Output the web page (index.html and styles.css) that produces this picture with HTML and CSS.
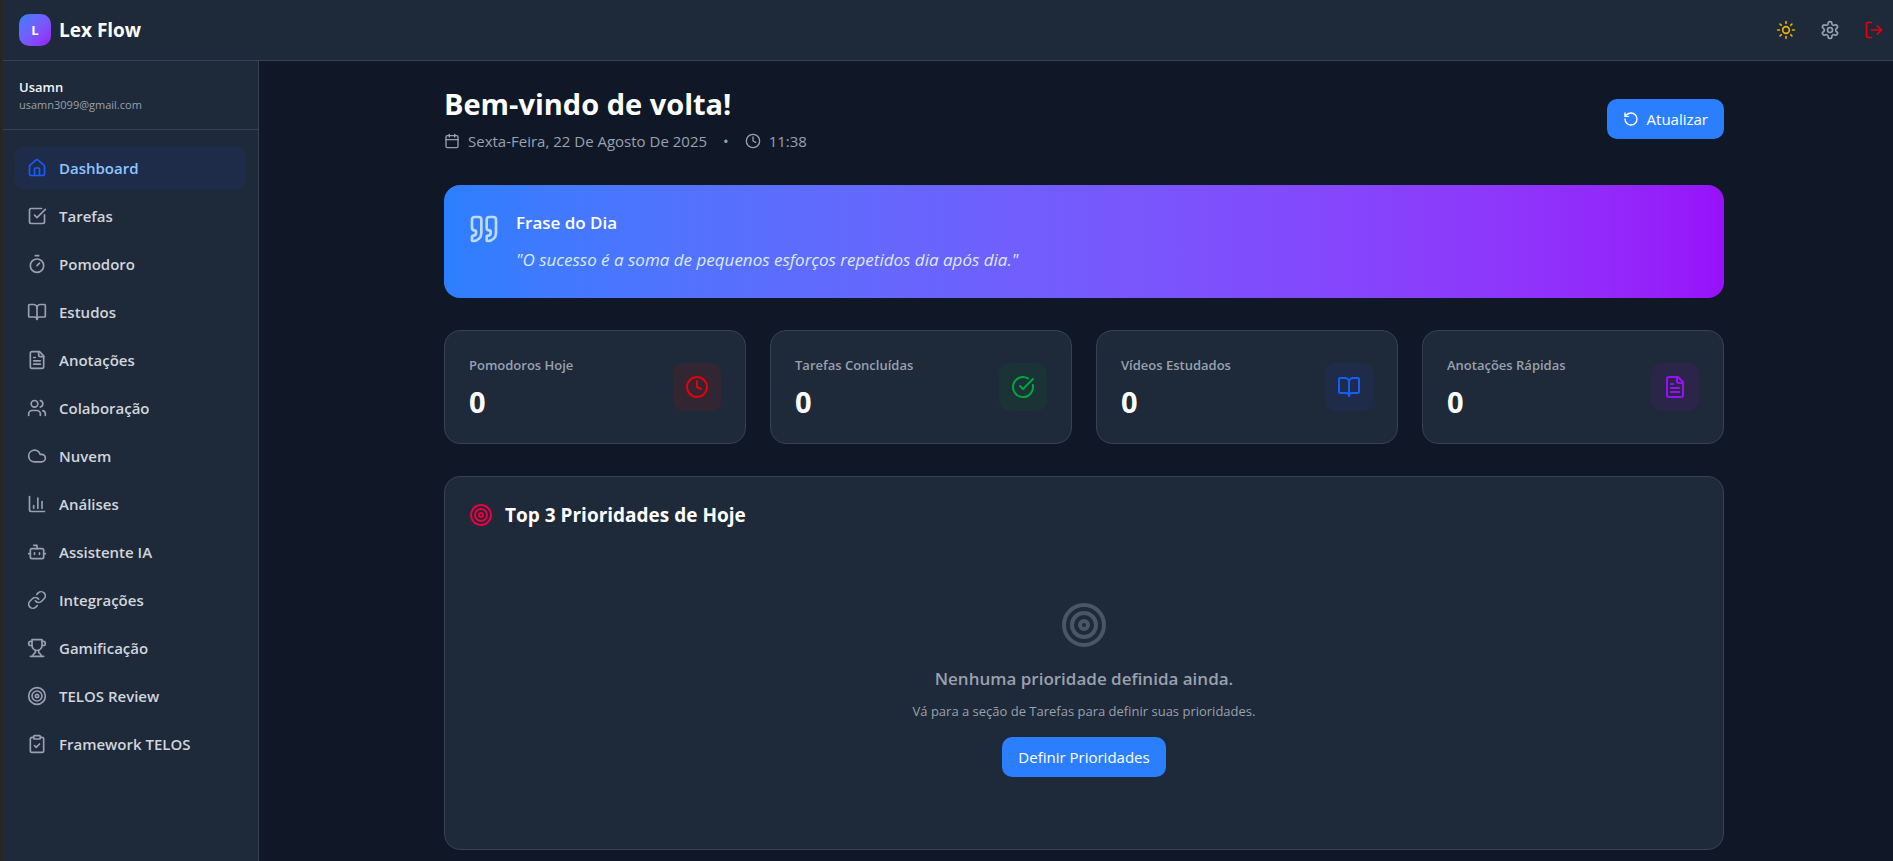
FILE: index.html
```html
<!DOCTYPE html>
<html lang="pt-BR">
<head>
<meta charset="utf-8">
<meta name="viewport" content="width=device-width, initial-scale=1">
<title>Lex Flow</title>
<link rel="stylesheet" href="styles.css">
</head>
<body>
<svg class="sprite" aria-hidden="true">
  <symbol id="home" viewBox="0 0 24 24"><path d="M15 21v-8a1 1 0 0 0-1-1h-4a1 1 0 0 0-1 1v8"/><path d="M3 10a2 2 0 0 1 .709-1.528l7-5.999a2 2 0 0 1 2.582 0l7 5.999A2 2 0 0 1 21 10v9a2 2 0 0 1-2 2H5a2 2 0 0 1-2-2z"/></symbol>
  <symbol id="check-square" viewBox="0 0 24 24"><path d="M21 10.5V19a2 2 0 0 1-2 2H5a2 2 0 0 1-2-2V5a2 2 0 0 1 2-2h12.5"/><path d="m9 11 3 3L22 4"/></symbol>
  <symbol id="timer" viewBox="0 0 24 24"><path d="M10 2h4"/><path d="m12 14 3-3"/><circle cx="12" cy="14" r="8"/></symbol>
  <symbol id="book" viewBox="0 0 24 24"><path d="M12 7v14"/><path d="M3 18a1 1 0 0 1-1-1V4a1 1 0 0 1 1-1h5a4 4 0 0 1 4 4 4 4 0 0 1 4-4h5a1 1 0 0 1 1 1v13a1 1 0 0 1-1 1h-6a3 3 0 0 0-3 3 3 3 0 0 0-3-3z"/></symbol>
  <symbol id="file" viewBox="0 0 24 24"><path d="M15 2H6a2 2 0 0 0-2 2v16a2 2 0 0 0 2 2h12a2 2 0 0 0 2-2V7Z"/><path d="M14 2v4a2 2 0 0 0 2 2h4"/><path d="M10 9H8"/><path d="M16 13H8"/><path d="M16 17H8"/></symbol>
  <symbol id="users" viewBox="0 0 24 24"><path d="M16 21v-2a4 4 0 0 0-4-4H6a4 4 0 0 0-4 4v2"/><circle cx="9" cy="7" r="4"/><path d="M22 21v-2a4 4 0 0 0-3-3.87"/><path d="M16 3.13a4 4 0 0 1 0 7.75"/></symbol>
  <symbol id="cloud" viewBox="0 0 24 24"><path d="M17.5 19H9a7 7 0 1 1 6.71-9h1.79a4.5 4.5 0 1 1 0 9Z"/></symbol>
  <symbol id="chart" viewBox="0 0 24 24"><path d="M3 3v16a2 2 0 0 0 2 2h16"/><path d="M18 17V9"/><path d="M13 17V5"/><path d="M8 17v-3"/></symbol>
  <symbol id="bot" viewBox="0 0 24 24"><path d="M12 8V4H8"/><rect x="4" y="8" width="16" height="12" rx="2"/><path d="M2 14h2"/><path d="M20 14h2"/><path d="M15 13v2"/><path d="M9 13v2"/></symbol>
  <symbol id="link" viewBox="0 0 24 24"><path d="M10 13a5 5 0 0 0 7.54.54l3-3a5 5 0 0 0-7.07-7.07l-1.72 1.71"/><path d="M14 11a5 5 0 0 0-7.54-.54l-3 3a5 5 0 0 0 7.07 7.07l1.71-1.71"/></symbol>
  <symbol id="trophy" viewBox="0 0 24 24"><path d="M6 9H4.5a2.5 2.5 0 0 1 0-5H6"/><path d="M18 9h1.5a2.5 2.5 0 0 0 0-5H18"/><path d="M4 22h16"/><path d="M10 14.66V17c0 .55-.47.98-.97 1.21C7.85 18.75 7 20.24 7 22"/><path d="M14 14.66V17c0 .55.47.98.97 1.21C16.15 18.75 17 20.24 17 22"/><path d="M18 2H6v7a6 6 0 0 0 12 0V2Z"/></symbol>
  <symbol id="target" viewBox="0 0 24 24"><circle cx="12" cy="12" r="10"/><circle cx="12" cy="12" r="6"/><circle cx="12" cy="12" r="2"/></symbol>
  <symbol id="clipboard" viewBox="0 0 24 24"><rect x="8" y="2" width="8" height="4" rx="1"/><path d="M16 4h2a2 2 0 0 1 2 2v14a2 2 0 0 1-2 2H6a2 2 0 0 1-2-2V6a2 2 0 0 1 2-2h2"/><path d="m9 14 2 2 4-4"/></symbol>
  <symbol id="sun" viewBox="0 0 24 24"><circle cx="12" cy="12" r="4"/><path d="M12 2v2"/><path d="M12 20v2"/><path d="m4.93 4.93 1.41 1.41"/><path d="m17.66 17.66 1.41 1.41"/><path d="M2 12h2"/><path d="M20 12h2"/><path d="m6.34 17.66-1.41 1.41"/><path d="m19.07 4.93-1.41 1.41"/></symbol>
  <symbol id="gear" viewBox="0 0 24 24"><path d="M12.22 2h-.44a2 2 0 0 0-2 2v.18a2 2 0 0 1-1 1.73l-.43.25a2 2 0 0 1-2 0l-.15-.08a2 2 0 0 0-2.73.73l-.22.38a2 2 0 0 0 .73 2.73l.15.1a2 2 0 0 1 1 1.72v.51a2 2 0 0 1-1 1.74l-.15.09a2 2 0 0 0-.73 2.73l.22.38a2 2 0 0 0 2.73.73l.15-.08a2 2 0 0 1 2 0l.43.25a2 2 0 0 1 1 1.73V20a2 2 0 0 0 2 2h.44a2 2 0 0 0 2-2v-.18a2 2 0 0 1 1-1.73l.43-.25a2 2 0 0 1 2 0l.15.08a2 2 0 0 0 2.73-.73l.22-.39a2 2 0 0 0-.73-2.73l-.15-.08a2 2 0 0 1-1-1.74v-.5a2 2 0 0 1 1-1.74l.15-.09a2 2 0 0 0 .73-2.73l-.22-.38a2 2 0 0 0-2.73-.73l-.15.08a2 2 0 0 1-2 0l-.43-.25a2 2 0 0 1-1-1.73V4a2 2 0 0 0-2-2z"/><circle cx="12" cy="12" r="3"/></symbol>
  <symbol id="logout" viewBox="0 0 24 24"><path d="M9 21H5a2 2 0 0 1-2-2V5a2 2 0 0 1 2-2h4"/><path d="m16 17 5-5-5-5"/><path d="M21 12H9"/></symbol>
  <symbol id="calendar" viewBox="0 0 24 24"><path d="M8 2v4"/><path d="M16 2v4"/><rect x="3" y="4" width="18" height="18" rx="2"/><path d="M3 10h18"/></symbol>
  <symbol id="clock" viewBox="0 0 24 24"><circle cx="12" cy="12" r="10"/><path d="M12 6v6l4 2"/></symbol>
  <symbol id="refresh" viewBox="0 0 24 24"><path d="M3 12a9 9 0 1 0 9-9 9.75 9.75 0 0 0-6.74 2.74L3 8"/><path d="M3 3v5h5"/></symbol>
  <symbol id="quote" viewBox="0 0 24 24"><path d="M16 3a2 2 0 0 0-2 2v6a2 2 0 0 0 2 2 1 1 0 0 1 1 1v1a2 2 0 0 1-2 2 1 1 0 0 0-1 1v2a1 1 0 0 0 1 1 6 6 0 0 0 6-6V5a2 2 0 0 0-2-2z"/><path d="M5 3a2 2 0 0 0-2 2v6a2 2 0 0 0 2 2 1 1 0 0 1 1 1v1a2 2 0 0 1-2 2 1 1 0 0 0-1 1v2a1 1 0 0 0 1 1 6 6 0 0 0 6-6V5a2 2 0 0 0-2-2z"/></symbol>
  <symbol id="check-circle" viewBox="0 0 24 24"><path d="M21.801 10A10 10 0 1 1 17 3.335"/><path d="m9 11 3 3L22 4"/></symbol>
</svg>
<div class="app">
  <header class="topbar">
    <a class="brand" href="#"><span class="brand-mark">L</span><span class="brand-name">Lex Flow</span></a>
    <div class="actions">
      <button class="icon-button sun" type="button" aria-label="Alternar tema"><svg class="icon"><use href="#sun"/></svg></button>
      <button class="icon-button" type="button" aria-label="Configurações"><svg class="icon"><use href="#gear"/></svg></button>
      <button class="icon-button logout" type="button" aria-label="Sair"><svg class="icon"><use href="#logout"/></svg></button>
    </div>
  </header>
  <div class="body">
    <aside class="sidebar">
      <div class="user">
        <p class="user-name">Usamn</p>
        <p class="user-email">usamn3099@gmail.com</p>
      </div>
      <nav class="nav">
        <a class="nav-item active" href="#" aria-current="page"><svg class="icon"><use href="#home"/></svg>Dashboard</a>
        <a class="nav-item" href="#"><svg class="icon"><use href="#check-square"/></svg>Tarefas</a>
        <a class="nav-item" href="#"><svg class="icon"><use href="#timer"/></svg>Pomodoro</a>
        <a class="nav-item" href="#"><svg class="icon"><use href="#book"/></svg>Estudos</a>
        <a class="nav-item" href="#"><svg class="icon"><use href="#file"/></svg>Anotações</a>
        <a class="nav-item" href="#"><svg class="icon"><use href="#users"/></svg>Colaboração</a>
        <a class="nav-item" href="#"><svg class="icon"><use href="#cloud"/></svg>Nuvem</a>
        <a class="nav-item" href="#"><svg class="icon"><use href="#chart"/></svg>Análises</a>
        <a class="nav-item" href="#"><svg class="icon"><use href="#bot"/></svg>Assistente IA</a>
        <a class="nav-item" href="#"><svg class="icon"><use href="#link"/></svg>Integrações</a>
        <a class="nav-item" href="#"><svg class="icon"><use href="#trophy"/></svg>Gamificação</a>
        <a class="nav-item" href="#"><svg class="icon"><use href="#target"/></svg>TELOS Review</a>
        <a class="nav-item" href="#"><svg class="icon"><use href="#clipboard"/></svg>Framework TELOS</a>
      </nav>
    </aside>
    <main class="main">
      <div class="content">
        <section class="welcome">
          <div class="welcome-text">
            <h1 class="welcome-title">Bem-vindo de volta!</h1>
            <div class="date-row">
              <span class="date-item"><svg class="icon icon-sm"><use href="#calendar"/></svg>Sexta-Feira, 22 De Agosto De 2025</span>
              <span>•</span>
              <span class="date-item"><svg class="icon icon-sm"><use href="#clock"/></svg>11:38</span>
            </div>
          </div>
          <button class="button" type="button"><svg class="icon icon-sm"><use href="#refresh"/></svg>Atualizar</button>
        </section>
        <section class="quote">
          <svg class="icon quote-icon"><use href="#quote"/></svg>
          <div class="quote-body">
            <h2 class="quote-title">Frase do Dia</h2>
            <p class="quote-text">"O sucesso é a soma de pequenos esforços repetidos dia após dia."</p>
          </div>
        </section>
        <section class="stats">
          <article class="card stat">
            <div class="stat-text"><p class="stat-label">Pomodoros Hoje</p><p class="stat-value">0</p></div>
            <span class="tile red"><svg class="icon icon-lg"><use href="#clock"/></svg></span>
          </article>
          <article class="card stat">
            <div class="stat-text"><p class="stat-label">Tarefas Concluídas</p><p class="stat-value">0</p></div>
            <span class="tile green"><svg class="icon icon-lg"><use href="#check-circle"/></svg></span>
          </article>
          <article class="card stat">
            <div class="stat-text"><p class="stat-label">Vídeos Estudados</p><p class="stat-value">0</p></div>
            <span class="tile blue"><svg class="icon icon-lg"><use href="#book"/></svg></span>
          </article>
          <article class="card stat">
            <div class="stat-text"><p class="stat-label">Anotações Rápidas</p><p class="stat-value">0</p></div>
            <span class="tile purple"><svg class="icon icon-lg"><use href="#file"/></svg></span>
          </article>
        </section>
        <section class="card priorities">
          <h2 class="priorities-title"><svg class="icon icon-lg"><use href="#target"/></svg>Top 3 Prioridades de Hoje</h2>
          <div class="empty">
            <svg class="icon empty-icon"><use href="#target"/></svg>
            <p class="empty-title">Nenhuma prioridade definida ainda.</p>
            <p class="empty-hint">Vá para a seção de Tarefas para definir suas prioridades.</p>
            <button class="button" type="button">Definir Prioridades</button>
          </div>
        </section>
      </div>
    </main>
  </div>
</div>
</body>
</html>
```
FILE: styles.css
```css
:root {
  --bg: #101828;
  --surface: #1e2939;
  --line: #364153;
  --muted: #99a1af;
  --blue: #2b7fff;
}

* {
  box-sizing: border-box;
}

body,
h1,
h2,
p {
  margin: 0;
}

body {
  background: var(--bg);
  color: #fff;
  font-family: "Segoe UI", "Open Sans", "Noto Sans", sans-serif;
  font-size: 15px;
  line-height: 24px;
}

a {
  color: inherit;
  text-decoration: none;
}

button {
  border: 0;
  font: inherit;
  cursor: pointer;
}

.sprite {
  display: none;
}

.icon {
  width: 20px;
  height: 20px;
  flex-shrink: 0;
  fill: none;
  stroke: currentColor;
  stroke-width: 2;
  stroke-linecap: round;
  stroke-linejoin: round;
}

.icon-sm {
  width: 16px;
  height: 16px;
}

.icon-lg {
  width: 24px;
  height: 24px;
}

.app {
  display: flex;
  flex-direction: column;
  min-height: 100vh;
  border-left: 3px solid #262626;
}

.topbar {
  display: flex;
  align-items: center;
  justify-content: space-between;
  padding: 12px 1px 12px 16px;
  background: var(--surface);
  border-bottom: 1px solid var(--line);
}

.brand {
  display: flex;
  align-items: center;
  gap: 8px;
}

.brand-mark {
  display: grid;
  place-items: center;
  width: 32px;
  height: 32px;
  border-radius: 10px;
  background: linear-gradient(to bottom right in oklab, #2b7fff, #9810fa);
  font-size: 13px;
  font-weight: 700;
}

.brand-name {
  font-size: 19px;
  line-height: 28px;
  font-weight: 700;
}

.actions {
  display: flex;
  gap: 8px;
}

.icon-button {
  display: flex;
  padding: 8px;
  border-radius: 10px;
  background: transparent;
  color: var(--muted);
}

.sun {
  color: #f0b100;
}

.logout {
  color: #e7000b;
}

.body {
  display: flex;
  flex: 1;
}

.sidebar {
  width: 256px;
  flex-shrink: 0;
  background: var(--surface);
  border-right: 1px solid var(--line);
}

.user {
  padding: 16px;
  border-bottom: 1px solid var(--line);
}

.user-name {
  font-size: 13px;
  line-height: 20px;
  font-weight: 600;
  color: #f3f4f6;
}

.user-email {
  font-size: 11px;
  line-height: 16px;
  color: var(--muted);
}

.nav {
  display: flex;
  flex-direction: column;
  gap: 4px;
  padding: 16px 12px;
}

.nav-item {
  display: flex;
  align-items: center;
  gap: 12px;
  padding: 10px 12px;
  border-radius: 10px;
  color: #d1d5dc;
  font-weight: 600;
}

.nav-item .icon {
  color: var(--muted);
}

.nav-item.active {
  background: #1e2c4a;
  color: #8ec5ff;
}

.nav-item.active .icon {
  color: #155dfc;
}

.main {
  flex: 1;
  min-width: 0;
  padding: 24px 8px 8px 24px;
}

.content {
  display: flex;
  flex-direction: column;
  gap: 32px;
  max-width: 1280px;
  margin: 0 auto;
}

.welcome {
  display: flex;
  align-items: center;
  justify-content: space-between;
}

.welcome-title {
  margin-bottom: 6px;
  font-size: 29px;
  line-height: 38px;
  font-weight: 700;
}

.date-row {
  display: flex;
  gap: 16px;
  color: var(--muted);
}

.date-item {
  display: flex;
  align-items: center;
  gap: 8px;
}

.button {
  display: inline-flex;
  align-items: center;
  gap: 8px;
  padding: 8px 16px;
  border-radius: 10px;
  background: var(--blue);
  color: #fff;
}

.quote {
  display: flex;
  align-items: flex-start;
  gap: 16px;
  padding: 24px;
  border-radius: 16px;
  background: linear-gradient(to right in oklab, #2b7fff, #9810fa);
}

.quote-icon {
  width: 32px;
  height: 32px;
  margin-top: 4px;
  color: #bedbff;
}

.quote-title {
  margin-bottom: 8px;
  font-size: 17px;
  line-height: 28px;
  font-weight: 600;
}

.quote-text {
  font-size: 17px;
  line-height: 29px;
  font-style: italic;
  color: #dbeafe;
}

.stats {
  display: grid;
  grid-template-columns: repeat(4, 1fr);
  gap: 24px;
}

.card {
  padding: 24px;
  border: 1px solid var(--line);
  border-radius: 16px;
  background: var(--surface);
}

.stat {
  display: flex;
  align-items: center;
  justify-content: space-between;
}

.stat-label {
  margin-bottom: 10px;
  font-size: 13px;
  line-height: 20px;
  font-weight: 600;
  color: var(--muted);
}

.stat-value {
  font-size: 29px;
  line-height: 34px;
  font-weight: 700;
}

.tile {
  display: flex;
  padding: 12px;
  border-radius: 10px;
}

.red {
  background: #322633;
  color: #e7000b;
}

.green {
  background: #1b3236;
  color: #00a63e;
}

.blue {
  background: #1e2c4a;
  color: #155dfc;
}

.purple {
  background: #2a2549;
  color: #9810fa;
}

.priorities-title {
  display: flex;
  align-items: center;
  gap: 12px;
  margin-bottom: 24px;
  font-size: 19px;
  line-height: 28px;
  font-weight: 700;
}

.priorities-title .icon {
  color: #ec003f;
}

.empty {
  display: flex;
  flex-direction: column;
  align-items: center;
  padding: 48px 0;
  color: var(--muted);
}

.empty-icon {
  width: 48px;
  height: 48px;
  margin-bottom: 16px;
  color: #4a5565;
}

.empty-title {
  margin-bottom: 8px;
  font-size: 17px;
  line-height: 28px;
  font-weight: 600;
}

.empty-hint {
  margin-bottom: 16px;
  font-size: 13px;
  line-height: 20px;
}
```
